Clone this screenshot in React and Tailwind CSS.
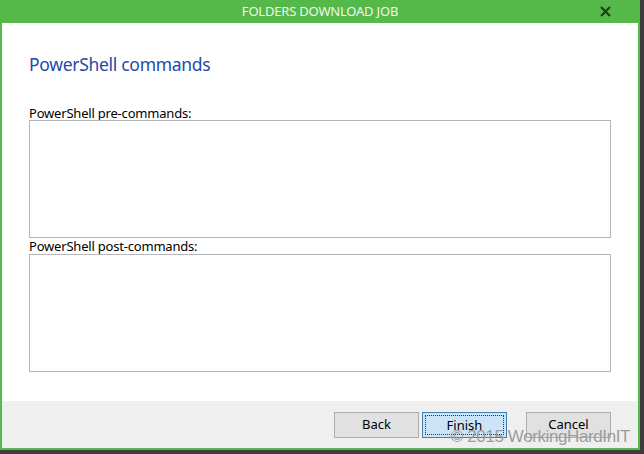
export default function App() {
  const font = { fontFamily: '"Noto Sans", "Open Sans", "Liberation Sans", sans-serif' };
  return (
    <div className="w-[644px] h-[454px] bg-[#3c3c3c] overflow-hidden" style={font}>
      <div className="w-[640px] h-[450px] flex flex-col border-x-2 border-b-2 border-[#54b948] bg-white">
        <div className="h-[23px] shrink-0 bg-[#54b948] flex items-center justify-center relative">
          <span className="text-[13px] text-[#eef8ec] tracking-[-0.2px]">FOLDERS DOWNLOAD JOB</span>
          <svg className="absolute right-[27px] top-[6px]" width="11" height="11" viewBox="0 0 11 11">
            <path d="M1 1 L10 10 M10 1 L1 10" stroke="#1f3d1a" strokeWidth="2.2" />
          </svg>
        </div>
        <div className="flex-1 flex flex-col pl-[27px] pr-[27px]">
          <div className="mt-[30px] text-[17.5px] text-[#1e4aa8] leading-[22px] tracking-[-0.3px]">PowerShell commands</div>
          <div className="mt-[31px] text-[13px] text-black leading-[14px] tracking-[-0.2px]">PowerShell pre-commands:</div>
          <div className="h-[118px] border border-[#b4b6bc] bg-white"></div>
          <div className="mt-[1px] text-[13px] text-black leading-[14px] tracking-[-0.2px]">PowerShell post-commands:</div>
          <div className="mt-[1px] h-[118px] border border-[#b4b6bc] bg-white"></div>
        </div>
        <div className="h-[47px] shrink-0 bg-[#efefef] relative flex items-start justify-end pr-[27px] pt-[11px] gap-[3px]">
          <button className="w-[85px] h-[26px] bg-[#e1e1e1] border border-[#adadad] text-[13px] text-black">Back</button>
          <button className="w-[85px] h-[26px] bg-[#cce4f7] border border-[#3c7fb1] text-[13px] text-black p-[2px]">
            <span className="block w-full h-full border border-dotted border-[#333] leading-[18px]">Finish</span>
          </button>
          <button className="ml-[16px] w-[85px] h-[26px] bg-[#e1e1e1] border border-[#adadad] text-[13px] text-black">Cancel</button>
          <div className="absolute right-[8px] top-[27px] text-[17px] leading-[18px] text-[#9c9c9c] tracking-[-0.4px]" style={{ fontFamily: '"Liberation Sans", sans-serif' }}>© 2015 WorkingHardInIT</div>
        </div>
      </div>
    </div>
  );
}
